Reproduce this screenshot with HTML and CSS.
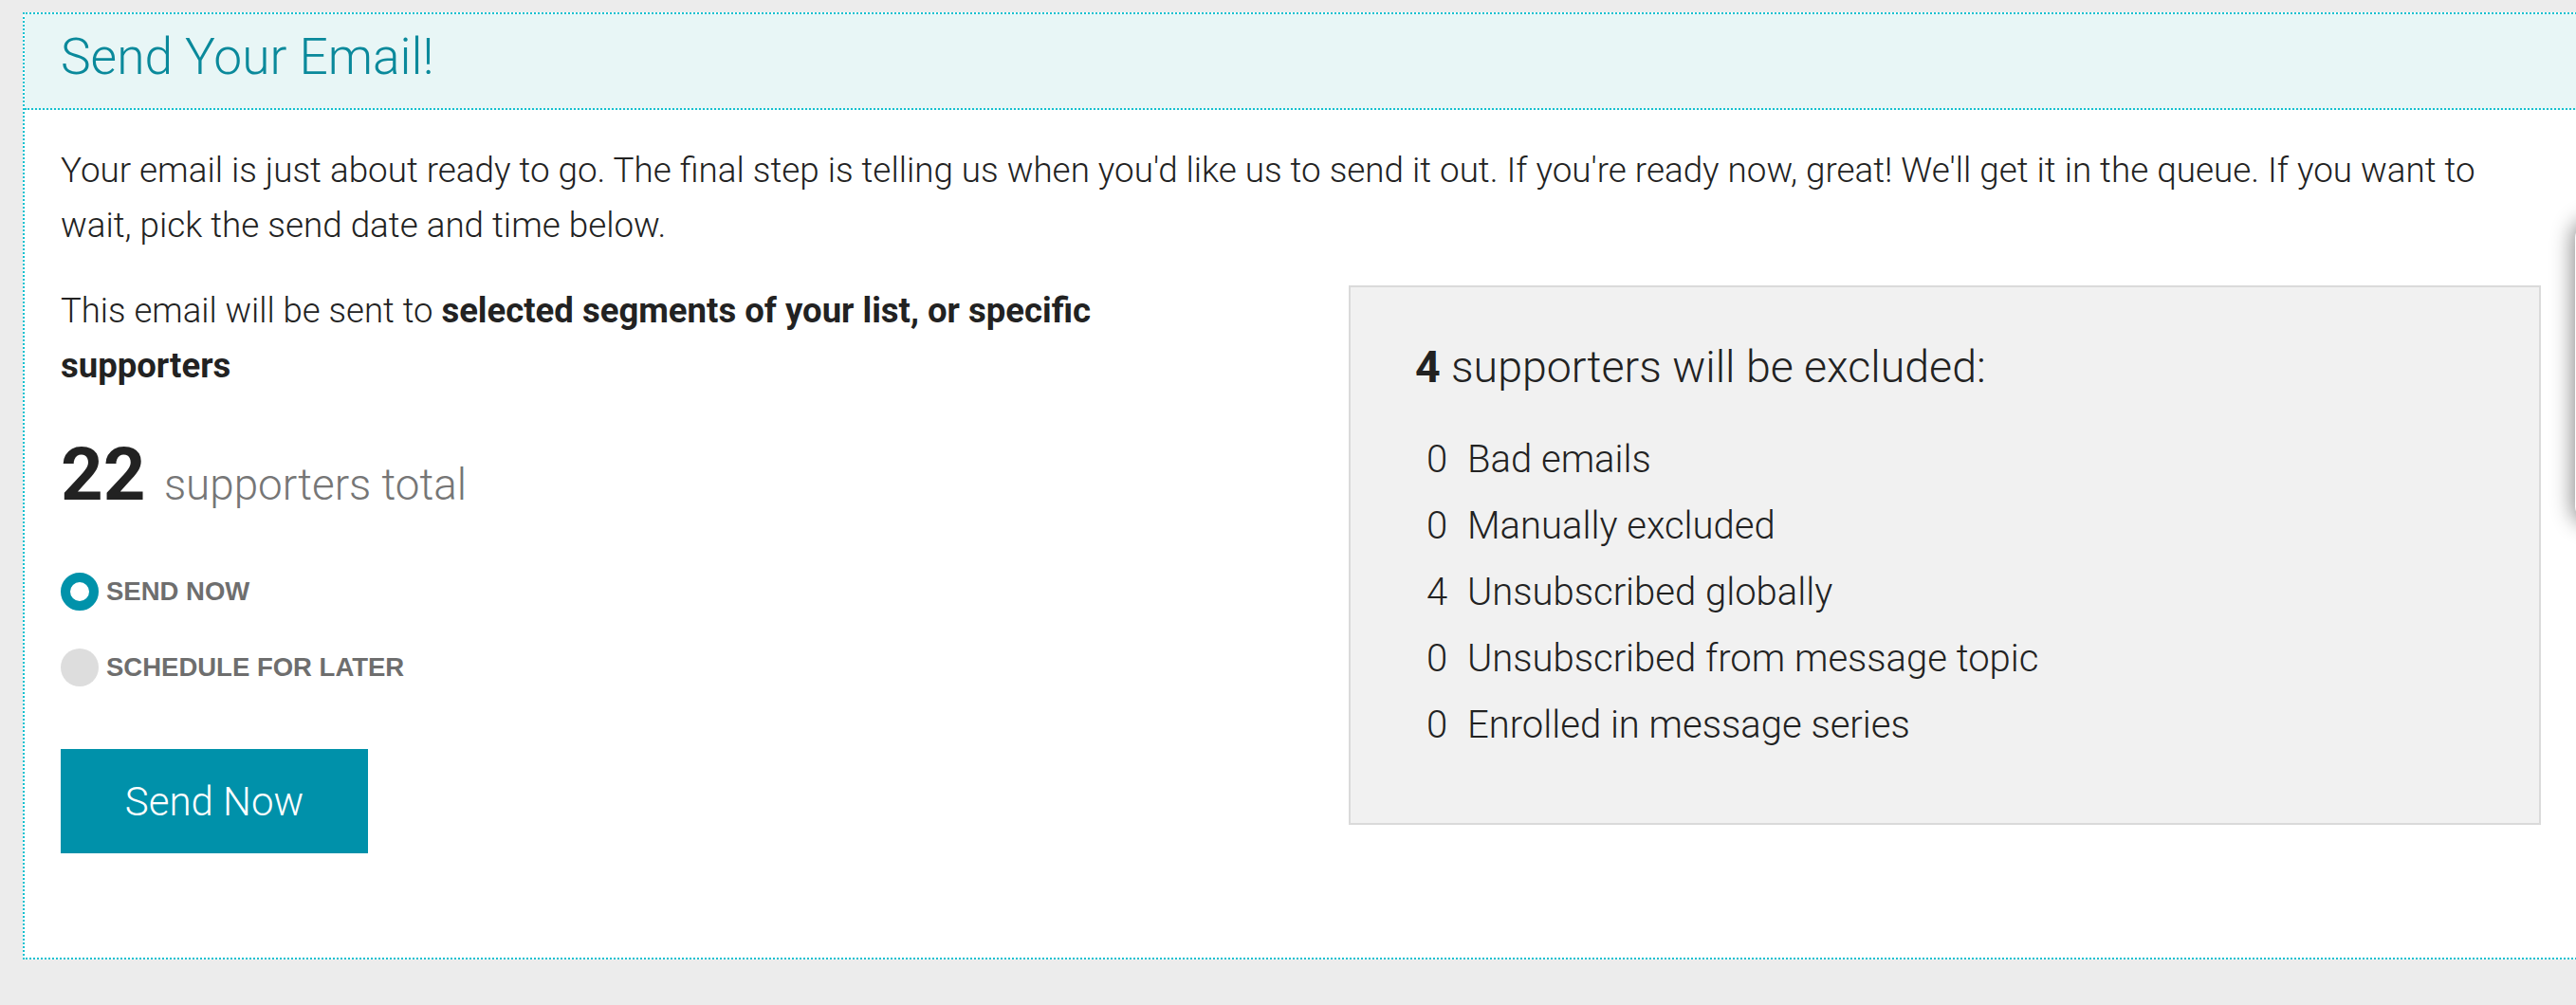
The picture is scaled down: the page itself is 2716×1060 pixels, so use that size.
FILE: index.html
```html
<!DOCTYPE html>
<html lang="en">
<head>
<meta charset="utf-8">
<title>Send Your Email!</title>
<link rel="stylesheet" href="styles.css">
</head>
<body>
<section class="panel">
  <header class="panel-head">
    <h1 class="panel-title">Send Your Email!</h1>
  </header>
  <div class="panel-body">
    <p class="intro">Your email is just about ready to go. The final step is telling us when you'd like us to send it out. If you're ready now, great! We'll get it in the queue. If you want to wait, pick the send date and time below.</p>
    <div class="row">
      <div class="left-col">
        <p class="audience">This email will be sent to <strong>selected segments of your list, or specific supporters</strong></p>
        <div class="total"><span class="total-num">22</span> <span class="total-label">supporters total</span></div>
        <div class="radio-group">
          <label class="radio checked"><span class="dot"></span><span class="radio-text">SEND NOW</span></label>
          <label class="radio"><span class="dot"></span><span class="radio-text">SCHEDULE FOR LATER</span></label>
        </div>
        <button class="send-btn">Send Now</button>
      </div>
      <div class="excluded">
        <h2 class="excluded-title"><strong>4</strong> supporters will be excluded:</h2>
        <ul class="excluded-list">
          <li><span class="n">0</span><span class="l">Bad emails</span></li>
          <li><span class="n">0</span><span class="l">Manually excluded</span></li>
          <li><span class="n">4</span><span class="l">Unsubscribed globally</span></li>
          <li><span class="n">0</span><span class="l">Unsubscribed from message topic</span></li>
          <li><span class="n">0</span><span class="l">Enrolled in message series</span></li>
        </ul>
      </div>
    </div>
  </div>
</section>
<div class="side-drawer"></div>
</body>
</html>
```
FILE: styles.css
```css
html, body {
  margin: 0;
  padding: 0;
}
body {
  background: #ececec;
  font-family: Roboto, "Liberation Sans", sans-serif;
  color: #222;
  overflow: hidden;
  height: 1060px;
}
.panel {
  box-sizing: border-box;
  margin: 13px 0 0 24px;
  width: 2700px;
  background: #fff;
  border: 2px dotted #14c1d0;
}
.panel-head {
  background: #e8f6f6;
  border-bottom: 2px dotted #14c1d0;
  height: 85px;
  padding: 14px 38px 0;
}
.panel-title {
  margin: 0;
  font-weight: 300;
  font-size: 53.3px;
  line-height: 63px;
  color: #0a899b;
}
.panel-body {
  padding: 35px 43px 110px 38px;
}
.intro {
  margin: 0 0 33px;
  max-width: 2560px;
  font-size: 36.8px;
  line-height: 57.6px;
  font-weight: 300;
}
.row {
  display: grid;
  grid-template-columns: 1110px 1fr;
  column-gap: 248px;
  align-items: start;
}
.audience {
  margin: 0;
  font-size: 36.5px;
  line-height: 57.6px;
  font-weight: 300;
}
.audience strong {
  font-weight: 700;
}
.total {
  margin-top: 39.5px;
  height: 93.6px;
  line-height: 93.6px;
  font-size: 78px;
}
.total-num {
  font-weight: 700;
  color: #222;
}
.total-label {
  font-size: 45.8px;
  line-height: 1;
  font-weight: 300;
  color: #767676;
}
.radio-group {
  margin-top: 56.7px;
  display: flex;
  flex-direction: column;
  gap: 40px;
}
.radio {
  display: flex;
  align-items: center;
  gap: 8px;
  height: 40px;
}
.dot {
  box-sizing: border-box;
  width: 40px;
  height: 40px;
  border-radius: 50%;
  background: #dddddd;
}
.radio.checked .dot {
  background: #fff;
  border: 10px solid #0092aa;
}
.radio-text {
  font-family: "Liberation Sans", Arial, sans-serif;
  font-weight: 700;
  font-size: 27.5px;
  line-height: 40px;
  color: #6e6e6e;
}
.send-btn {
  margin-top: 66px;
  width: 324px;
  height: 110px;
  border: 0;
  background: #0091aa;
  color: #fff;
  font-family: Roboto, "Liberation Sans", sans-serif;
  font-weight: 300;
  font-size: 42px;
  padding: 0;
  display: block;
}
.excluded {
  margin-top: 2px;
  background: #f1f1f1;
  border: 2px solid #dadada;
  padding: 57px 40px 68px 68px;
}
.excluded-title {
  margin: 0;
  font-weight: 300;
  font-size: 46.5px;
  line-height: 55.2px;
  color: #222;
}
.excluded-title strong {
  font-weight: 700;
}
.excluded-list {
  list-style: none;
  margin: 35px 0 0;
  padding: 0 0 0 12px;
  font-size: 40px;
  line-height: 70px;
  font-weight: 300;
}
.excluded-list li {
  display: flex;
}
.excluded-list .n {
  width: 43px;
  flex: none;
}
.side-drawer {
  position: absolute;
  left: 2715px;
  top: 235px;
  width: 200px;
  height: 315px;
  background: #fff;
  border-radius: 16px;
  box-shadow: 0 0 22px 3px rgba(0, 0, 0, 0.45);
}
```
